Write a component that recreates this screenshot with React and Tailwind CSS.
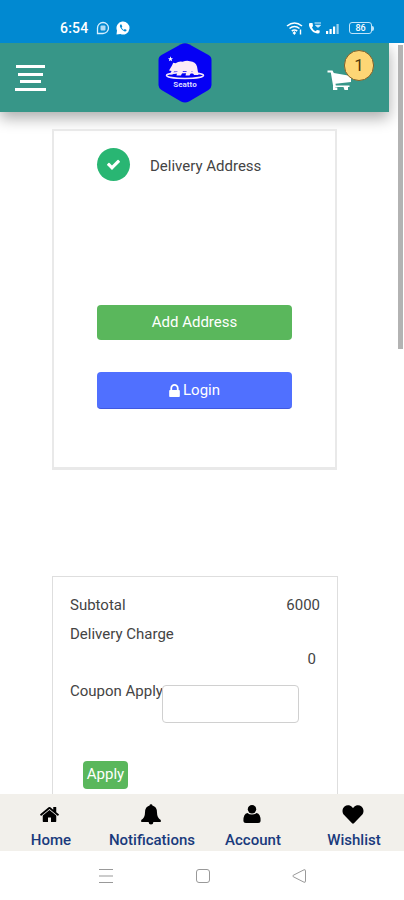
import React from 'react';
import { FaHeart } from 'react-icons/fa';

const HomeIcon = ({ className }) => (
  <svg viewBox="0 0 1792 1792" fill="currentColor" className={className}>
    <path d="M1472 992v480q0 26-19 45t-45 19h-384v-384h-256v384h-384q-26 0-45-19t-19-45v-480q0-1 .5-3t.5-3l575-474 575 474q1 2 1 6zm223-69l-62 74q-8 9-21 11h-3q-13 0-21-7l-692-577-692 577q-12 8-24 7-13-2-21-11l-62-74q-8-10-7-23.5t11-21.5l719-599q32-26 76-26t76 26l244 204v-195q0-14 9-23t23-9h192q14 0 23 9t9 23v408l219 182q10 8 11 21.5t-7 23.5z" />
  </svg>
);

const LockIcon = ({ className }) => (
  <svg viewBox="320 128 1152 1408" fill="currentColor" className={className}>
    <path d="M640 768h512v-192q0-106-75-181t-181-75-181 75-75 181v192zm832 96v576q0 40-28 68t-68 28h-960q-40 0-68-28t-28-68v-576q0-40 28-68t68-28h32v-192q0-184 132-316t316-132 316 132 132 316v192h32q40 0 68 28t28 68z" />
  </svg>
);

const CheckIcon = ({ className }) => (
  <svg viewBox="0 0 1792 1792" fill="currentColor" className={className}>
    <path d="M1671 566q0 40-28 68l-724 724-136 136q-28 28-68 28t-68-28l-136-136-362-362q-28-28-28-68t28-68l136-136q28-28 68-28t68 28l294 295 656-657q28-28 68-28t68 28l136 136q28 28 28 68z" />
  </svg>
);

const BellIcon = ({ className }) => (
  <svg viewBox="0 0 20 21" fill="currentColor" className={className}>
    <path d="M8.600 1.600Q8.600.2 10 .2t1.400 1.400Q16 2.800 16 8.500q0 5.500 3.800 7.500v1.500q0 .5-.6.5H.8q-.6 0-.6-.5V16Q4 14 4 8.500 4 2.800 8.600 1.600zM7.600 18h4.800q-.2 2.600-2.400 2.600T7.600 18z" />
  </svg>
);

const UserIcon = ({ className }) => (
  <svg viewBox="0 0 18 18" fill="currentColor" className={className}>
    <circle cx="9" cy="4.300" r="4.200" />
    <path d="M4.400 8Q6.400 9.600 9 9.600T13.600 8Q17.600 8.900 17.600 15.500q0 2.500-2.500 2.500H2.900q-2.500 0-2.500-2.500 0-6.600 4-7.500z" />
  </svg>
);

const Logo = () => (
  <div className="relative w-[54px] h-[60px]">
    <svg viewBox="0 0 54 60" className="w-full h-full">
      <path d="M23 1.200Q27-.8 31 1.200L50.500 12Q53.500 13.700 53.500 17v25Q53.500 45 50.500 47L31 58.500Q27 60.500 23 58.500L3.500 47Q.5 45 .5 42V17Q.5 13.700 3.500 12z" fill="#0500f5" />
      <path d="M12.500 13.300l.7 1.900 1.800.1-1.400 1.200.5 1.800-1.600-1-1.600 1 .5-1.800-1.400-1.200 1.800-.1z" fill="#fff" />
      <ellipse cx="27" cy="32.500" rx="18.500" ry="2.900" fill="none" stroke="#f7e6fa" strokeWidth="1.500" />
      <path d="M11 27.500L14 22.500l1.200-2.700 2.300.5Q21 18 24.500 18.800q4-1.500 7.500-.6 5.500.3 7 5.300l1.500 8.500H36l-2-4-2.500 4.500H27.500l1.200-4.500H25l-2 4.500H18.500l1-4-3.500 0-1.500 3H12l1.500-3.500z" fill="#fbe9f6" />
    </svg>
    <span className="absolute left-0 top-[37px] w-full text-center text-[8px] leading-[10px] font-bold text-[#d9d9ff]">Seatto</span>
  </div>
);

const CartIcon = () => (
  <svg viewBox="0 0 26 22" fill="#fff" className="w-[26px] h-[22px]">
    <path d="M.5.500h5l1.300 2.500L24 6v6L8.500 13.800l.3 1.700H22.500V17H6.300L3.800 2.500H.5z" />
    <path d="M6 16h2.300v1.500h2V20H6zM16.500 17h4.500v3h-3.500z" />
  </svg>
);

const StatusBar = () => (
  <div className="h-[43px] bg-[#0189d1] flex items-start justify-between pt-5 pl-[60px] pr-[30px] text-white">
    <div className="flex items-center h-4">
      <span className="w-[36px] text-[14px] font-medium leading-4 whitespace-nowrap tracking-[0.2px]">6:54</span>
      <svg viewBox="0 0 14 14" className="w-[14px] h-[14px]">
        <path d="M1.500 12.500V7A5.500 5.500 0 1 1 7 12.500z" fill="none" stroke="#d7efff" strokeWidth="1.300" />
        <rect x="4.500" y="4.500" width="5" height="5" rx="1" fill="#b5dcf3" />
      </svg>
      <svg viewBox="0 0 14 14" className="w-[14px] h-[14px] ml-[6px]">
        <path d="M.5 13.500L1 9.500A6.500 6.500 0 1 1 4.500 13z" fill="#fff" />
        <path d="M4.300 3.600q-1 1.200.2 3.200 1.700 3 4.300 3.700 1.500 0 1.900-1.500L8.800 8l-1 .9Q6.300 8.200 5.600 6.600l.7-.9-.8-2.100z" fill="#0189d1" />
      </svg>
    </div>
    <div className="flex items-center h-4">
      <svg viewBox="0 0 18 15" className="w-[18px] h-[15px]" fill="none" stroke="#fff" strokeWidth="1.600">
        <path d="M1 5Q8.500-1 16 5M3.500 7.500Q8.500 3.500 13.500 7.500M5.800 10Q8.500 8 11.200 10" />
        <path d="M8.500 10l-2 2 2 2 1.500-2z" fill="#fff" stroke="none" />
        <path d="M14.500 8.500v5" strokeWidth="1.400" />
      </svg>
      <svg viewBox="0 0 14 14" className="w-[14px] h-[14px] ml-[4px]">
        <path d="M1.500 2q-1.300 2 .7 5.500 3 4.800 7.500 5 2 0 2-1.500V9.500L9 9l-1.500 1.300Q5 9 4 6.500L5 5l-.5-3z" fill="#fff" />
        <path d="M6.500 2h6.500M7.500 4.300h5l-2.500 2z" stroke="#d7efff" strokeWidth="1" fill="#d7efff" />
      </svg>
      <svg viewBox="0 0 14 12" className="w-[14px] h-[12px] ml-[4px] mt-[2px]" fill="#fff">
        <rect x="0" y="8" width="2.200" height="3" />
        <rect x="3.500" y="6" width="2.200" height="5" />
        <rect x="7" y="3.500" width="2.200" height="7.500" />
        <rect x="10.500" y="1" width="2.200" height="10" opacity=".6" />
      </svg>
      <div className="ml-[9px] w-[23px] h-[12px] rounded-[3px] border border-[#bfe4fa] text-center text-[9px] leading-[10px] font-medium">86</div>
      <div className="w-[2px] h-[5px] bg-[#bfe4fa] rounded-r"></div>
    </div>
  </div>
);

const Header = () => (
  <div className="w-[389px] h-[69px] bg-[#379688] flex justify-between pl-[15px] pr-[15px] shadow-[0_6px_14px_rgba(0,0,0,0.33)]">
    <div className="w-[31px] pt-[22px] flex flex-col items-center gap-[4.500px]">
      <div className="w-[29px] h-[3px] bg-white"></div>
      <div className="w-[25px] h-[3px] bg-white"></div>
      <div className="w-[21px] h-[3px] bg-white"></div>
      <div className="w-[31px] h-[3px] bg-white"></div>
    </div>
    <div className="-ml-[3px]">
      <Logo />
    </div>
    <div className="relative w-[47px] pt-[27px]">
      <CartIcon />
      <span className="absolute right-0 top-[7px] w-[30px] h-[31px] rounded-full bg-[#fed675] border border-[#80612c] text-[#51380b] text-[17px] leading-[29px] text-center">1</span>
    </div>
  </div>
);

const navItems = [
  { label: 'Home', icon: <HomeIcon className="w-[21px] h-[21px] -ml-[3px]" /> },
  { label: 'Notifications', icon: <BellIcon className="w-[20px] h-[21px] -ml-[2px]" /> },
  { label: 'Account', icon: <UserIcon className="w-[18px] h-[18px] -ml-[3px]" /> },
  { label: 'Wishlist', icon: <FaHeart className="w-[22px] h-[21px] -ml-[3px]" /> }
];

const App = () => {
  return (
    <div className="w-[404px] h-[900px] overflow-hidden bg-white flex flex-col text-[#444] text-[15px] leading-5 font-['Roboto',sans-serif]">
      <StatusBar />

      {/* Page content with scrollbar */}
      <div className="h-[751px] flex justify-between overflow-hidden">
        <div className="w-[389px]">
          <Header />

          {/* Delivery card */}
          <div className="mt-[17px] ml-[52px] w-[285px] h-[341px] border-2 border-b-[3px] border-[#e9e9e9] px-[43px] pt-[17px]">
            <div className="flex items-center">
              <div className="w-[33px] h-[33px] rounded-full bg-[#29b673] flex items-center justify-center text-white">
                <CheckIcon className="w-[15px] h-[15px]" />
              </div>
              <span className="ml-5 mt-[2px] whitespace-nowrap">Delivery Address</span>
            </div>
            <button className="block mt-[124px] w-[195px] h-[35px] pb-[1px] rounded bg-[#5ab75c] text-white">Add Address</button>
            <button className="mt-[32px] w-[195px] h-[37px] rounded bg-[#5070ff] border-b border-[#4058e0] text-white flex items-center justify-center gap-[3px]">
              <LockIcon className="w-[11px] h-[13px]" />
              Login
            </button>
          </div>

          {/* Order summary */}
          <div className="mt-[106px] ml-[52px] w-[286px] h-[260px] border border-[#dedede] pl-[17px] pr-[17px] pt-[18px]">
            <div className="flex justify-between">
              <span>Subtotal</span>
              <span>6000</span>
            </div>
            <div className="mt-[9px]">Delivery Charge</div>
            <div className="mt-[5px] pr-[4px] text-right">0</div>
            <div className="mt-[12px] flex items-start">
              <span className="w-[92px] whitespace-nowrap">Coupon Apply</span>
              <input className="mt-[4px] w-[137px] h-[38px] rounded border border-[#d0d0d0] bg-white" />
            </div>
            <button className="mt-[38px] ml-[13px] w-[45px] h-[28px] pb-[2px] rounded bg-[#5ab75c] text-white">Apply</button>
          </div>
        </div>
        <div className="mt-[2px] mr-[1px] w-[5px] h-[304px] bg-[#b3b3b3]"></div>
      </div>

      {/* Bottom navigation */}
      <div className="h-[57px] bg-[#f2f0eb] grid grid-cols-4">
        {navItems.map((item) => (
          <div key={item.label} className="flex flex-col items-center pt-[9px] pl-[1px]">
            <div className="h-[22px] flex items-center text-black">{item.icon}</div>
            <span className="mt-[5px] text-[15px] font-medium text-[#193a7c] whitespace-nowrap">{item.label}</span>
          </div>
        ))}
      </div>

      {/* System keys */}
      <div className="h-[49px] flex items-center pl-[99px]">
        <svg viewBox="0 0 14 14" className="w-[14px] h-[14px]" stroke="#999" strokeWidth="1">
          <path d="M0 .5h14M0 7h14M0 13.500h14" />
        </svg>
        <div className="ml-[83px] w-[14px] h-[14px] rounded-[3px] border border-[#999]"></div>
        <svg viewBox="0 0 15 14" className="ml-[82px] w-[15px] h-[14px]" fill="none" stroke="#999" strokeWidth="1">
          <path d="M1.200 6.300Q.5 7 1.200 7.700L12 13.200q1.500.5 1.500-1V1.800q0-1.500-1.500-1z" />
        </svg>
      </div>
    </div>
  );
};

export default App;
